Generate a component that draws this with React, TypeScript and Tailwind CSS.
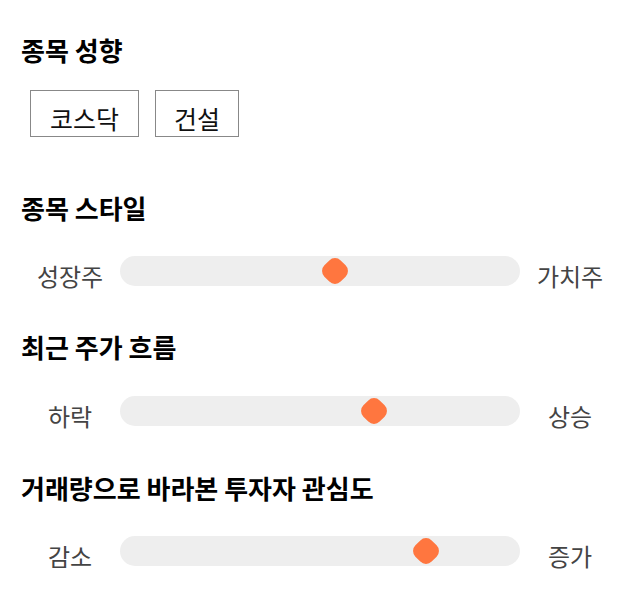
import React from 'react';

const font = { fontFamily: '"Noto Sans CJK KR", "Noto Sans", sans-serif' };

interface RangeRowProps {
  left: string;
  right: string;
  pos: number;
}

const RangeRow: React.FC<RangeRowProps> = ({ left, right, pos }) => (
  <div className="flex items-center h-[30px]">
    <span className="w-[100px] h-[30px] text-center text-[24px] leading-[40px] text-[#444]">{left}</span>
    <div className="relative w-[400px] h-[30px] rounded-full bg-[#eeeeee]">
      <div
        className="absolute top-1/2 w-[23px] h-[23px] -translate-x-1/2 -translate-y-1/2 rotate-45 rounded-[8px] bg-[#ff763f]"
        style={{ left: pos }}
      />
    </div>
    <span className="w-[100px] h-[30px] text-center text-[24px] leading-[40px] text-[#444]">{right}</span>
  </div>
);

const Heading: React.FC<{ children: React.ReactNode; className?: string }> = ({ children, className }) => (
  <h2 className={`text-[26px] leading-[30px] font-bold text-black pl-[1px] ${className ?? ''}`}>{children}</h2>
);

export default function App() {
  return (
    <div className="w-[640px] h-[606px] bg-white px-[20px] pt-[35px]" style={font}>
      <Heading>종목 성향</Heading>
      <div className="flex gap-[16px] mt-[25px] ml-[10px]">
        <span className="border border-[#888] px-[19px] pt-[12px] pb-[3px] text-[25px] leading-[30px] text-[#111]">코스닥</span>
        <span className="border border-[#888] px-[18px] pt-[12px] pb-[3px] text-[25px] leading-[30px] text-[#111]">건설</span>
      </div>

      <Heading className="mt-[56px]">종목 스타일</Heading>
      <div className="mt-[33px]">
        <RangeRow left="성장주" right="가치주" pos={215} />
      </div>

      <Heading className="mt-[46px]">최근 주가 흐름</Heading>
      <div className="mt-[34px]">
        <RangeRow left="하락" right="상승" pos={254} />
      </div>

      <Heading className="mt-[47px]">거래량으로 바라본 투자자 관심도</Heading>
      <div className="mt-[33px]">
        <RangeRow left="감소" right="증가" pos={306} />
      </div>
    </div>
  );
}
